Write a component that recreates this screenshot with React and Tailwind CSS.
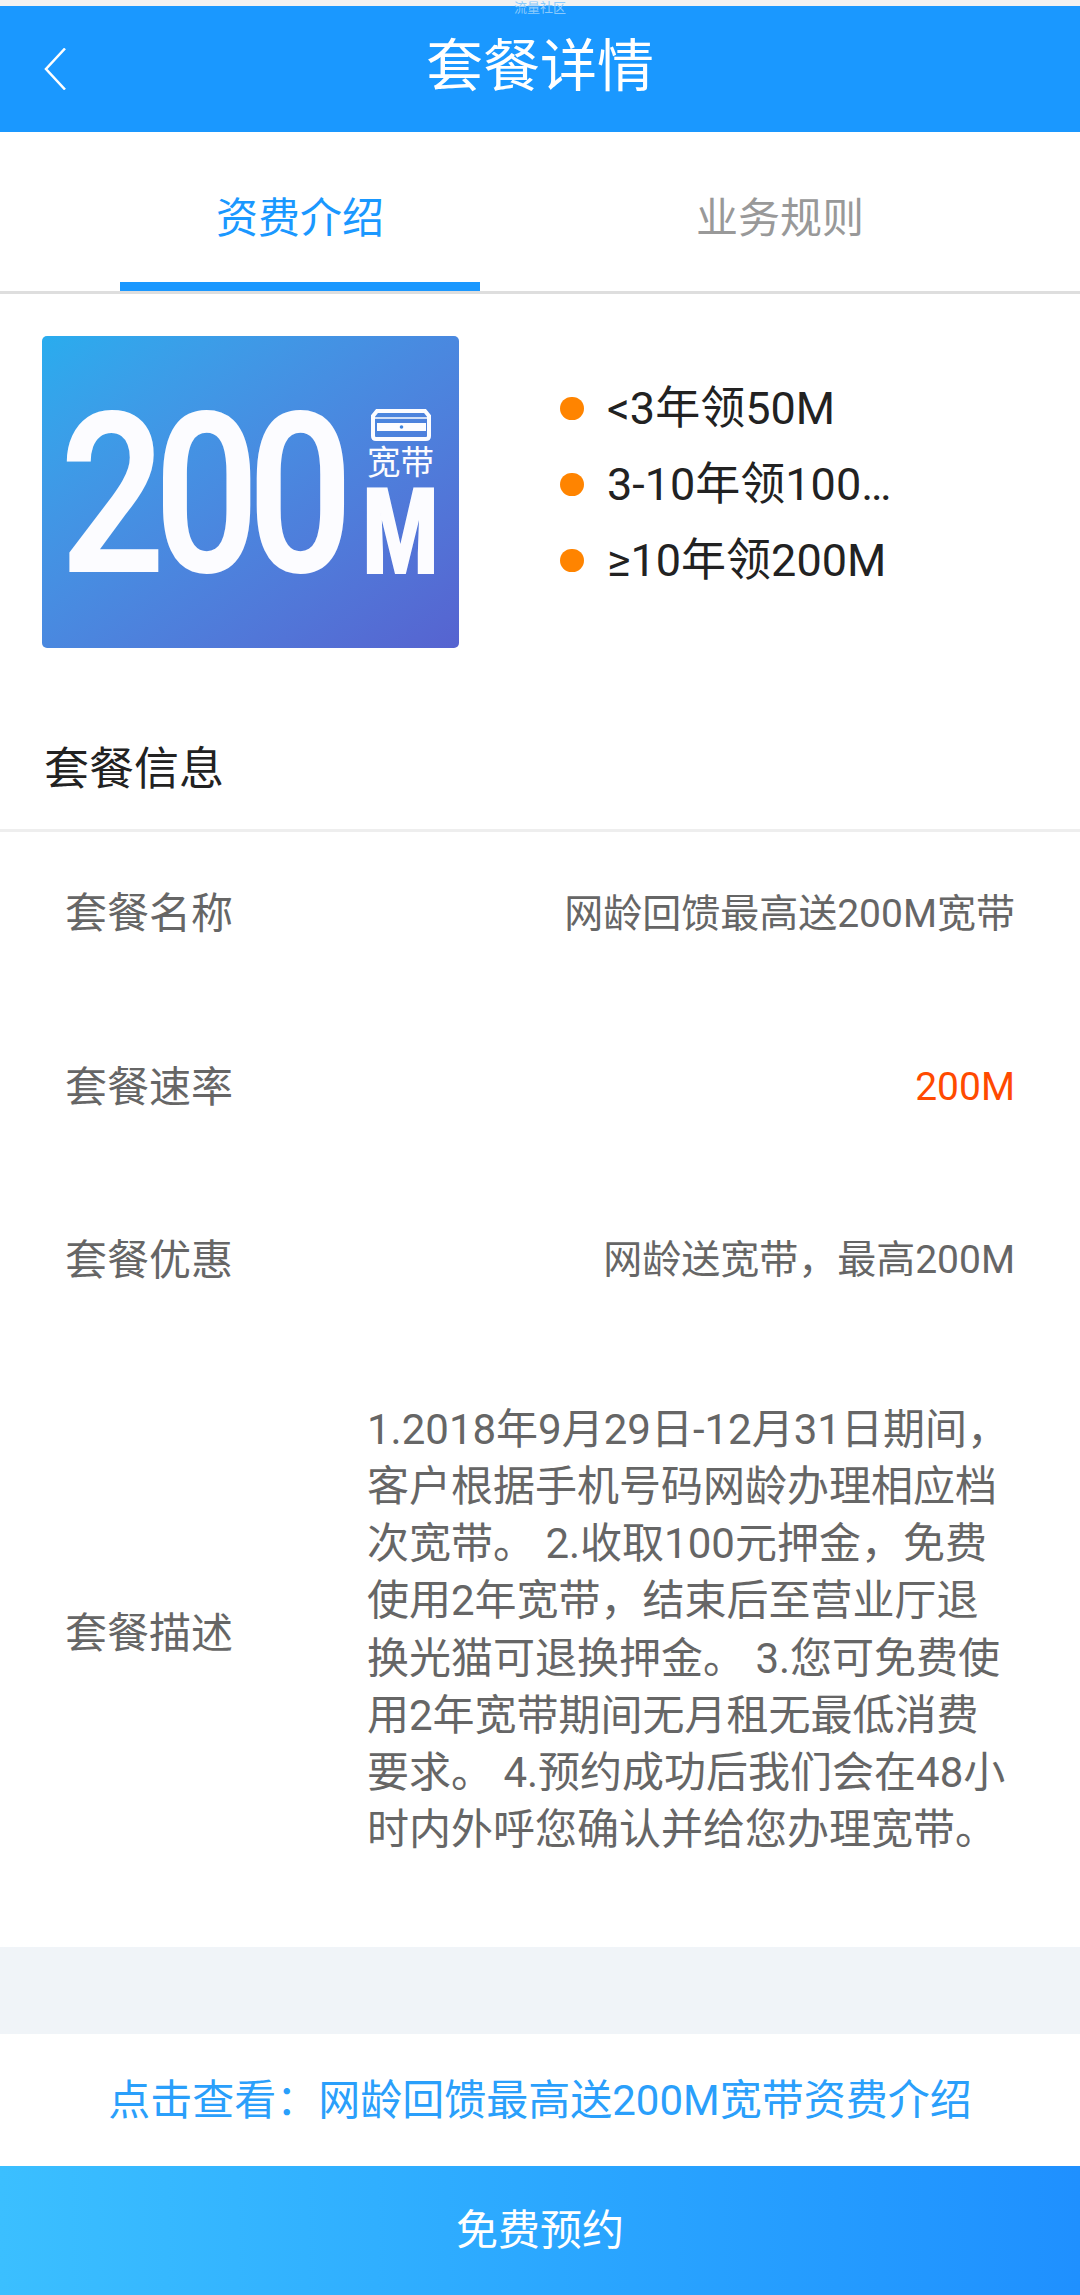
import React from 'react';

const font = 'font-["Roboto","Noto_Sans_CJK_SC",sans-serif]';

const Logo = () => (
    <div className="w-[417px] h-[312px] shrink-0 rounded-[5px] bg-gradient-to-br from-[#29acee] to-[#5663d0]">
        <svg className="w-full h-full" viewBox="0 0 417 312" fontFamily="Roboto, 'Noto Sans CJK SC', sans-serif" fill="#fcfcff">
            <text transform="translate(18 236) scale(0.82 1)" fontSize="225" fontWeight="600" letterSpacing="-14">200</text>
            <path d="M335 75H383L387 80V100Q387 103 384 103H334Q331 103 331 100V80Z" fill="none" stroke="#fcfcff" strokeWidth="4" />
            <path d="M331 82H387" stroke="#fcfcff" strokeWidth="1.5" />
            <rect x="335" y="87" width="49" height="8" fill="#fcfcff" />
            <circle cx="359.5" cy="91" r="1.8" fill="#3f83dc" />
            <text x="325" y="138" fontSize="33" textLength="67" lengthAdjust="spacingAndGlyphs">宽带</text>
            <text x="321" y="237" fontSize="119" fontWeight="900" stroke="#fcfcff" strokeWidth="2" textLength="75" lengthAdjust="spacingAndGlyphs">M</text>
        </svg>
    </div>
);

const Bullet = ({ children }) => (
    <div className="flex items-center h-[76px]">
        <span className="w-6 h-[23px] rounded-full bg-[#ff8400] shrink-0 mr-[23px]"></span>
        <span className="text-[45px] leading-[76px] text-[#222] w-[286px] whitespace-nowrap overflow-hidden text-ellipsis">{children}</span>
    </div>
);

const InfoRow = ({ label, value, valueClass = 'text-[#666]' }) => (
    <div className="flex items-center justify-between h-[164px] mb-[9.5px] pl-[65px] pr-[65px]">
        <span className="text-[42px] text-[#666]">{label}</span>
        <span className={`text-[39px] ${valueClass}`}>{value}</span>
    </div>
);

export default function App() {
    return (
        <div className={`w-[1080px] h-[2295px] bg-white flex flex-col overflow-hidden ${font}`}>
            {/* status strip */}
            <div className="h-[6px] bg-[#f2f2f2] flex justify-center overflow-visible">
                <span className="relative z-10 text-[13px] leading-[15px] text-[#8ccbfc] whitespace-nowrap">流量社区</span>
            </div>

            <div className="h-[126px] bg-[#1a98ff] flex items-center relative">
                <svg className="absolute left-[44px] top-[42px] w-[24px] h-[42px]" viewBox="0 0 24 42" fill="none" stroke="#fff" strokeWidth="2.5">
                    <path d="M21 0.5L2 21l19 20.5" />
                </svg>
                <h1 className="w-full text-center text-white text-[57px] leading-[116px] pb-[4px]">套餐详情</h1>
            </div>

            <div className="h-[162px] px-[60px] grid grid-cols-2 border-b-[3px] border-[#dedede]">
                <div className="flex flex-col items-center">
                    <div className="h-[150px] flex items-center text-[42px] text-[#1a98ff] pt-[24px]">资费介绍</div>
                    <div className="w-[360px] h-[9px] bg-[#1a98ff]"></div>
                </div>
                <div className="flex flex-col items-center">
                    <div className="h-[150px] flex items-center text-[42px] text-[#999] pt-[24px]">业务规则</div>
                </div>
            </div>

            <div className="flex items-start pl-[42px] pt-[42px]">
                <Logo />
                <div className="ml-[101px] mt-[35px]">
                    <Bullet>&lt;3年领50M</Bullet>
                    <Bullet>3-10年领100M</Bullet>
                    <Bullet>≥10年领200M</Bullet>
                </div>
            </div>

            <div className="mt-[84px] h-[100px] pl-[44px] flex items-start text-[45px] leading-[76px] text-[#222] border-b-[3px] border-[#eee]">
                套餐信息
            </div>

            <InfoRow label="套餐名称" value="网龄回馈最高送200M宽带" />
            <InfoRow label="套餐速率" value="200M" valueClass="text-[#ff4a00]" />
            <InfoRow label="套餐优惠" value="网龄送宽带，最高200M" />

            <div className="flex items-center h-[595.5px] pb-[32px] pl-[65px] pr-[65px]">
                <span className="w-[302px] shrink-0 text-[42px] text-[#666]">套餐描述</span>
                <p className="text-[42px] leading-[57.2px] text-[#666] w-[645px] shrink-0 mb-[8px]">
                    1.2018年9月29日-12月31日期间，客户根据手机号码网龄办理相应档次宽带。 2.收取100元押金，免费使用2年宽带，结束后至营业厅退换光猫可退换押金。 3.您可免费使用2年宽带期间无月租无最低消费要求。 4.预约成功后我们会在48小时内外呼您确认并给您办理宽带。
                </p>
            </div>

            <div className="h-[87px] bg-[#f0f4f8]"></div>

            <div className="h-[132px] flex items-center justify-center text-[42px] text-[#2a9ffb]">
                点击查看：网龄回馈最高送200M宽带资费介绍
            </div>

            <div className="h-[129px] flex items-center justify-center bg-gradient-to-r from-[#3bbfff] to-[#1f90ff] text-white text-[42px]">
                免费预约
            </div>
        </div>
    );
}
